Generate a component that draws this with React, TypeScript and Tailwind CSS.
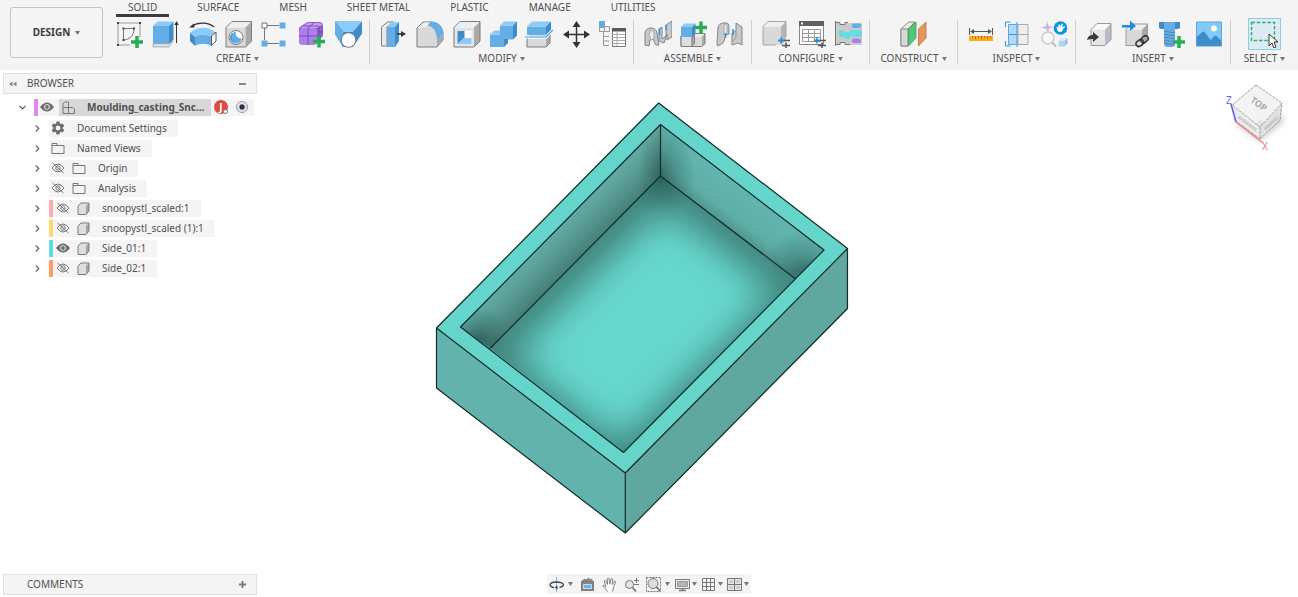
import React, { useState } from 'react';
import { MdSettings } from 'react-icons/md';
import { ChevronDown, ChevronRight } from 'lucide-react';

const BLUE = '#64ade5';
const BLUE_LIGHT = '#8bcbfb';
const BLUE_DARK = '#418cc6';
const GREY = '#d9d9d9';
const GREY_LIGHT = '#efefef';
const GREY_DARK = '#a9a9a9';
const LINE = '#7d7d7d';

type IconProps = { children: React.ReactNode };

function ToolIcon({ children }: IconProps) {
  return (
    <svg viewBox="0 0 28 28" className="h-7 w-7" fill="none" aria-hidden="true">
      {children}
    </svg>
  );
}

type BoxProps = {
  x: number;
  y: number;
  w: number;
  h: number;
  d: number;
  front?: string;
  top?: string;
  side?: string;
  line?: string;
};

// Small oblique box: front face plus a top and a right face of depth d
function Box({ x, y, w, h, d, front = GREY, top = GREY_LIGHT, side = GREY_DARK, line = 'none' }: BoxProps) {
  return (
    <g>
      <path d={`M${x} ${y + d}h${w}v${h}h${-w}z`} fill={front} />
      <path d={`M${x} ${y + d}l${d} ${-d}h${w}l${-d} ${d}z`} fill={top} />
      <path d={`M${x + w} ${y + d}l${d} ${-d}v${h}l${-d} ${d}z`} fill={side} />
      <path d={`M${x} ${y + d}l${d} ${-d}h${w}v${h}l${-d} ${d}h${-w}z`} stroke={line} strokeLinejoin="round" />
    </g>
  );
}

function Plus({ x, y }: { x: number; y: number }) {
  return <path d={`M${x - 6} ${y}h12M${x} ${y - 6}v12`} stroke="#27ae52" strokeWidth="3.5" />;
}

function Sliders({ x, y }: { x: number; y: number }) {
  return (
    <g>
      <path d={`M${x - 6} ${y}h12M${x - 2} ${y + 5}h8`} stroke="#5a5a5a" strokeWidth="1.4" />
      <path d={`M${x - 3} ${y - 3}v6M${x - 6} ${y}h6`} stroke="#1b8fe6" strokeWidth="1.6" />
      <path d={`M${x + 2} ${y + 2}v6`} stroke="#5a5a5a" strokeWidth="1.6" />
    </g>
  );
}

const SketchIcon = () => (
  <ToolIcon>
    <path d="M2 3h22v14M14 25H2V3" stroke="#999" />
    <path d="M7.500 8.500H18c0 7-4 11-10.500 11.500z" stroke="#777" />
    <path d="M1 2h2v2H1zM23 2h2v2h-2zM1 24h2v2H1zM6.500 7.500h2v2h-2zM17 7.500h2v2h-2zM6.500 19h2v2h-2z" fill="#444" />
    <Plus x={21} y={22} />
  </ToolIcon>
);

const ExtrudeIcon = () => (
  <ToolIcon>
    <path d="M1 24l4-3h16l-4 6H1z" fill="#ddd" stroke="#999" strokeWidth=".7" />
    <Box x={1} y={1.500} w={16} h={18} d={4.500} front={BLUE} top={BLUE_LIGHT} side={BLUE_DARK} />
    <path d="M24.500 4v19" stroke="#333" />
    <path d="M24.500 1l2.200 4h-4.400z" fill="#333" />
  </ToolIcon>
);

const RevolveIcon = () => (
  <ToolIcon>
    <path d="M1 13C7 6 21 6 27 13l-5 4c-4-3-12-3-16 0z" fill={BLUE_LIGHT} />
    <path d="M1 13l5 4v9l-5-5z" fill={BLUE_DARK} />
    <path d="M6 17c4-3 12-3 16 0v9c-4-3-12-3-16 0z" fill={BLUE} />
    <path d="M22.500 16l4.500-4v9l-4.500 4.500z" fill="#fff" stroke="#555" />
    <path d="M3 6C9 2 19 2 25 7" stroke="#333" strokeWidth="1.200" />
    <path d="M0 7.500l5-4 .5 4z" fill="#333" />
  </ToolIcon>
);

const HoleIcon = () => (
  <ToolIcon>
    <Box x={1} y={1.500} w={19.500} h={19.500} d={6} line={LINE} />
    <circle cx="11" cy="17.500" r="7" fill="#fff" stroke="#777" />
    <path d="M11 11.500c-8 2-7 12 0 12 3 0 5-2 6-5-5 0-7-3-6-7z" fill={BLUE} />
    <path d="M8 12.500a6 6 0 0 0 0 10c-2-4-2-7 0-10z" fill={BLUE_DARK} />
  </ToolIcon>
);

const PatternIcon = () => (
  <ToolIcon>
    <path d="M6 5.500h12M3.500 8v12M6 23.500h12" stroke="#777" />
    <path d="M1 3h5v5H1z" fill="#fff" stroke="#777" />
    <path d="M18.500 2.500h6v6h-6zM.5 20.500h6v6h-6zM18.500 20.500h6v6h-6z" fill={BLUE} />
  </ToolIcon>
);

const FormIcon = () => (
  <ToolIcon>
    <path d="M1 9q0-2 2-3l5-3q1-1 3-1h10q4 0 4 4v9q0 2-2 3l-5 6H4q-3 0-3-3z" fill="#8d5ec9" />
    <path d="M2 8l6-4q1-1 3-1h10q3 0 3 2l-5 3z" fill="#c79bf8" />
    <rect x="1" y="8" width="18" height="17" rx="3.500" fill="#ac80ea" />
    <path d="M10 8v17M1 16h18l5-5M10 8l6-5M5 6h16v13" stroke="#6f43a8" strokeWidth=".8" />
    <Plus x={21} y={21.500} />
  </ToolIcon>
);

const EmbossIcon = () => (
  <ToolIcon>
    <path d="M1 1.500h27v12L19 27H9L1 14z" fill={BLUE_DARK} />
    <path d="M1 1.500h27L19 12H9.500z" fill={BLUE_LIGHT} />
    <path d="M1 1.500L9.500 12 8 25 1 14z" fill={BLUE} />
    <circle cx="14.500" cy="20" r="7.300" fill="#fdfdfd" stroke="#777" />
  </ToolIcon>
);

const PressPullIcon = () => (
  <ToolIcon>
    <path d="M1.500 7l6-5h6L7 7v19H1.500z" fill="#e9e9e9" stroke={LINE} />
    <path d="M7 7h8v20H7z" fill={BLUE} />
    <path d="M7 7l5-5h7l-4 5z" fill={BLUE_LIGHT} />
    <path d="M15 7l4-5v19l-4 6z" fill={BLUE_DARK} />
    <path d="M17 14h6" stroke="#333" strokeWidth="1.600" />
    <path d="M21 11l5 3-5 3z" fill="#333" />
  </ToolIcon>
);

const FilletIcon = () => (
  <ToolIcon>
    <path d="M1 8l6-6h7c8 0 13 6 13 12v6l-6 7H1z" fill={GREY} stroke={LINE} />
    <path d="M11 5l4-3.500c8 0 12 5 12.500 12L21 20C21 12 18 7 11 5z" fill={BLUE} />
    <path d="M21 20l6-6v6l-6 7z" fill={GREY_DARK} />
    <path d="M2 8l6-5.500h6L11 6l-3 2z" fill={GREY_LIGHT} />
  </ToolIcon>
);

const ShellIcon = () => (
  <ToolIcon>
    <Box x={1} y={1.500} w={20} h={19.500} d={6} line={LINE} front="#e4e4e4" />
    <path d="M4.500 11h14v13h-14z" fill="#fff" />
    <path d="M4.500 11h7v7l-7 6z" fill={BLUE_DARK} />
    <path d="M4.500 24l6-6h8v6z" fill={BLUE_LIGHT} />
  </ToolIcon>
);

const CombineIcon = () => (
  <ToolIcon>
    <Box x={11} y={1.500} w={13} h={14} d={4} front={BLUE} top={BLUE_LIGHT} side={BLUE_DARK} />
    <Box x={1} y={10.500} w={14} h={12.500} d={4} front={BLUE} top={BLUE_LIGHT} side={BLUE_DARK} />
    <path d="M11 6h9v13h-9z" fill={BLUE} />
  </ToolIcon>
);

const SplitIcon = () => (
  <ToolIcon>
    <Box x={2} y={15} w={19} h={8} d={4} line={LINE} />
    <Box x={2} y={1.500} w={19} h={8.500} d={5} front={BLUE} top={BLUE_LIGHT} side={BLUE_DARK} />
    <path d="M0 17h21l7-7" stroke="#fff" strokeWidth="3" />
    <path d="M0 17h21l7-7" stroke="#2f96ea" strokeWidth="1.200" />
  </ToolIcon>
);

const MoveIcon = () => (
  <ToolIcon>
    <path d="M14.500 4v21M4 14.500h21" stroke="#333" strokeWidth="1.500" />
    <path d="M14.500 1l4 6h-8zM14.500 28l4-6h-8zM1 14.500l6-4v8zM28 14.500l-6-4v8z" fill="#333" />
  </ToolIcon>
);

const ParametersIcon = () => (
  <ToolIcon>
    <path d="M6.500 1.500h5v5h-5z" fill="#fff" />
    <path d="M1 1h6v6H1z" fill={BLUE} />
    <path d="M1.500 7.500h5v4h-5zM6.500 6.500h5v5h-5zM5.500 12v13.500H11M5.500 16.500H11M5.500 21H11" stroke="#999" />
    <path d="M14.500 8.500h13v18h-13z" fill="#fff" stroke="#777" />
    <path d="M14 8h14v3.500H14z" fill="#5a5a5a" />
    <path d="M14 14.500h13M14 17.500h13M14 20.500h13M14 23.500h13M19 11v15" stroke="#aaa" />
  </ToolIcon>
);

const JointIcon = () => (
  <ToolIcon>
    <path d="M1 13q1-5 6-5 5 0 6 5l2 12h-3l-3-6-3 1-1 6-4-1z" fill="#c9c9c9" stroke="#848484" />
    <path d="M7 10q3 0 3 3v6l-3 1-2-6z" fill="#ededed" stroke="#999" strokeWidth=".8" />
    <path d="M15 9l3-2v12l4-3V5l6-4v16l-5 3v-6l-3 9-5-2z" fill="#c9c9c9" stroke="#848484" />
    <path d="M15.500 8v7M22 5v5" stroke="#2f96ea" strokeWidth="1.500" />
  </ToolIcon>
);

const NewComponentIcon = () => (
  <ToolIcon>
    <Box x={12} y={13.500} w={10} h={10} d={3} line={LINE} />
    <Box x={1} y={13.500} w={11} h={10} d={2.500} line={LINE} />
    <path d="M1 16h11v10.500H1z" fill="#dedede" stroke={LINE} />
    <Box x={1} y={3.500} w={11} h={10} d={3.500} front={BLUE} top={BLUE_LIGHT} side={BLUE_DARK} />
    <Plus x={21} y={7.500} />
  </ToolIcon>
);

const AsBuiltJointIcon = () => (
  <ToolIcon>
    <path d="M2 8q1-5 6-5 5-1 5 4v7l-3 1-3 8-5 3-1-2z" fill="#c9c9c9" stroke="#848484" />
    <path d="M8 5q3-2 3 2v6l-3 2z" fill="#ededed" stroke="#999" strokeWidth=".8" />
    <path d="M16 13l4-2V3l6 4v18l-4-2-6 2z" fill="#c9c9c9" stroke="#848484" />
    <path d="M20 11v7l-4 4" stroke="#999" />
    <path d="M9.500 13v5M17 9v6" stroke="#2f96ea" strokeWidth="1.600" />
  </ToolIcon>
);

const ConfigureIcon = () => (
  <ToolIcon>
    <Box x={1} y={1.500} w={18} h={18.500} d={5} side="#b5b5b5" />
    <path d="M14 25H1V6.500l5-5h18V17" stroke="#a5a5a5" />
    <Sliders x={22} y={20.500} />
  </ToolIcon>
);

const ConfigTableIcon = () => (
  <ToolIcon>
    <path d="M1.500 1.500h24v23h-24z" fill="#fff" stroke="#888" />
    <path d="M1 1h25v5H1z" fill="#5f5f5f" />
    <path d="M3 2.500h2v2H3z" fill="#fff" />
    <path d="M4.500 9.500h18v12h-18zM4.500 13.500h18M4.500 17.500h18M10.500 9.500v12M16.500 9.500v12" stroke="#999" />
    <Sliders x={22} y={20.500} />
  </ToolIcon>
);

const ConfigRulesIcon = () => (
  <ToolIcon>
    <path d="M1 3h5v2h5V3h17v22H12v-2H7v2H1z" fill="#cbcbcb" />
    <path d="M1.500 1v25M1 2.500h5v2h5v-2h3M1 24.500h5v-2h5v2h5" stroke="#777" />
    <path d="M5 10h5v2h5v-2h13v7H16v2h-5v-2H5z" fill="#68dbe3" />
    <rect x="18" y="3.500" width="9" height="4.500" rx="2" fill="#5daeee" />
    <rect x="18" y="18.500" width="9" height="4.500" rx="2" fill="#a97dea" />
  </ToolIcon>
);

const PlaneIcon = () => (
  <ToolIcon>
    <path d="M1 9l8-7h6L8 9v17H1z" fill="#ededed" stroke="#888" />
    <path d="M1 9h7v17H1z" fill={GREY} stroke="#888" />
    <path d="M8.500 9L16 2v16l-7.500 8z" fill="#55c47b" stroke="#3d9a5c" strokeWidth=".8" />
    <path d="M18.500 9L26 2v16l-7.500 8z" fill="#e59562" stroke="#b8723f" strokeWidth=".8" />
  </ToolIcon>
);

const MeasureIcon = () => (
  <ToolIcon>
    <path d="M1.500 8v7M24.500 8v7M3 11.500h20" stroke="#555" />
    <path d="M2 11.500l4-2.500v5zM24 11.500L20 9v5z" fill="#555" />
    <path d="M1 16h24v5H1z" fill="#ffab12" />
    <path d="M4.500 16v2M7.500 16v3M10.500 16v2M13.500 16v3M16.500 16v2M19.500 16v3M22.500 16v2" stroke="#a8741a" />
  </ToolIcon>
);

const SectionIcon = () => (
  <ToolIcon>
    <path d="M14 4.500h10v20H14zM14 14.500h10" fill="#eee" stroke="#aaa" />
    <path d="M4 4h9v20H4z" fill="#b4d9f5" />
    <path d="M13 2v25M4 14.500h9" stroke="#2f96ea" />
    <path d="M1.500 7V2h5M1.500 21v5h5" stroke="#2f96ea" />
    <path d="M4.500 4.500h9M4.500 4.500v20M4.500 24.500h9" stroke="#5aabec" />
  </ToolIcon>
);

const AssistIcon = () => (
  <ToolIcon>
    <path d="M7 1l1.500 5L14 7l-5 1.500L8 14l-1.500-5L1 7.500 6 6z" fill="#cdb2ec" />
    <circle cx="8" cy="18" r="6" fill="#f9f9f9" stroke="#c9c9c9" strokeWidth="1.400" />
    <path d="M12 22.500l4 4" stroke="#d0b5a0" strokeWidth="1.800" />
    <Box x={18.500} y={18} w={6} h={5.500} d={3} front="#b3d6f0" top="#d7eafa" side="#92bfe0" />
    <circle cx="20.500" cy="8" r="6.800" fill="#0b94dc" />
    <path d="M16.500 6.500l2 1V4.500H20V7l2-3.500 1 .5-1 3.500 2.500-1.500.5 1-2 2c0 4-6 4-6 0z" fill="#fff" />
  </ToolIcon>
);

const DeriveIcon = () => (
  <ToolIcon>
    <Box x={5} y={3.500} w={14} h={16} d={6} front="#e6e6e9" top="#f9f9f9" side="#b9bcc4" line="#999" />
    <path d="M1 20c1-4 3-5 6-5v-3l6 5-6 5v-3c-2 0-4 0-6 1z" fill="#3a3a3a" />
  </ToolIcon>
);

const InsertLinkIcon = () => (
  <ToolIcon>
    <Box x={4} y={4} w={16} h={16} d={5.500} line="#999" />
    <path d="M0 5h8V.5L14 6l-6 5V7.500H0z" fill="#1f8ce0" />
    <g transform="rotate(-38 20 21)" stroke="#333" strokeWidth="1.500">
      <rect x="13" y="18.500" width="8" height="5.500" rx="2.700" />
      <rect x="19" y="18.500" width="8" height="5.500" rx="2.700" />
    </g>
  </ToolIcon>
);

const FastenerIcon = () => (
  <ToolIcon>
    <path d="M5 8h11v17l-2 2H7l-2-2z" fill={BLUE} />
    <path d="M5 11l11 2M5 14l11 2M5 17l11 2M5 20l11 2M5 23l11 2" stroke="#4a86b5" />
    <path d="M0 2h21v6l-2 1H2L0 8z" fill={BLUE_DARK} />
    <path d="M5 2h11v7H5z" fill={BLUE} />
    <Plus x={20} y={22} />
  </ToolIcon>
);

const CanvasIcon = () => (
  <ToolIcon>
    <path d="M1.500 2h25v24h-25z" fill="#81c8fb" stroke="#5fa6d8" />
    <circle cx="19" cy="8.500" r="3" fill="#fffbd0" />
    <path d="M1.500 17l6-5q1-1 2 0l6 8 4-4q1-1 2 0l5 5v5h-25z" fill="#3c8dcb" />
  </ToolIcon>
);

const SelectIcon = () => (
  <ToolIcon>
    <path d="M1.500 2.500h23v18h-23z" stroke="#2fae5c" strokeWidth="1.400" strokeDasharray="3.500 1.800" />
    <path d="M19 14v12l3-3 2 5 2-1-2-5h4z" fill="#fff" stroke="#333" />
  </ToolIcon>
);

type Tool = { name: string; icon: React.ComponentType };
type ToolGroup = { name: string; width: string; tools: Tool[] };

const groups: ToolGroup[] = [
  {
    name: 'CREATE',
    width: 'w-[264px]',
    tools: [
      { name: 'Create Sketch', icon: SketchIcon },
      { name: 'Extrude', icon: ExtrudeIcon },
      { name: 'Revolve', icon: RevolveIcon },
      { name: 'Hole', icon: HoleIcon },
      { name: 'Pattern', icon: PatternIcon },
      { name: 'Create Form', icon: FormIcon },
      { name: 'Emboss', icon: EmbossIcon },
    ],
  },
  {
    name: 'MODIFY',
    width: 'w-[264px]',
    tools: [
      { name: 'Press Pull', icon: PressPullIcon },
      { name: 'Fillet', icon: FilletIcon },
      { name: 'Shell', icon: ShellIcon },
      { name: 'Combine', icon: CombineIcon },
      { name: 'Split Body', icon: SplitIcon },
      { name: 'Move', icon: MoveIcon },
      { name: 'Change Parameters', icon: ParametersIcon },
    ],
  },
  {
    name: 'ASSEMBLE',
    width: 'w-[118px]',
    tools: [
      { name: 'Joint', icon: JointIcon },
      { name: 'New Component', icon: NewComponentIcon },
      { name: 'As-built Joint', icon: AsBuiltJointIcon },
    ],
  },
  {
    name: 'CONFIGURE',
    width: 'w-[118px]',
    tools: [
      { name: 'Configure', icon: ConfigureIcon },
      { name: 'Configuration Table', icon: ConfigTableIcon },
      { name: 'Configuration Rules', icon: ConfigRulesIcon },
    ],
  },
  { name: 'CONSTRUCT', width: 'w-[88px]', tools: [{ name: 'Offset Plane', icon: PlaneIcon }] },
  {
    name: 'INSPECT',
    width: 'w-[118px]',
    tools: [
      { name: 'Measure', icon: MeasureIcon },
      { name: 'Section Analysis', icon: SectionIcon },
      { name: 'Inspect Assistant', icon: AssistIcon },
    ],
  },
  {
    name: 'INSERT',
    width: 'w-[155px]',
    tools: [
      { name: 'Derive', icon: DeriveIcon },
      { name: 'Insert Link', icon: InsertLinkIcon },
      { name: 'Insert Fastener', icon: FastenerIcon },
      { name: 'Canvas', icon: CanvasIcon },
    ],
  },
];

const tabs = ['SOLID', 'SURFACE', 'MESH', 'SHEET METAL', 'PLASTIC', 'MANAGE', 'UTILITIES'];

function Caret() {
  return (
    <svg viewBox="0 0 5 4" className="h-1 w-[5px] shrink-0" aria-hidden="true">
      <path d="M0 0h5L2.500 4z" fill="#777" />
    </svg>
  );
}

function Ribbon() {
  const [activeTab, setActiveTab] = useState('SOLID');

  return (
    <header className="flex h-[70px] bg-[#f4f4f4]">
      <div className="w-[106px] shrink-0 pt-[7px] pl-[10px]">
        <button className="flex h-[51px] w-[93px] items-center justify-center gap-[5px] rounded-[3px] border border-[#c4c4c4] text-[10px] font-bold text-[#3c3c3c]">
          DESIGN
          <Caret />
        </button>
      </div>
      <div className="min-w-0 flex-1">
        <nav className="flex gap-4 pl-[10px]">
          {tabs.map((tab) => (
            <button
              key={tab}
              onClick={() => setActiveTab(tab)}
              className={
                tab === activeTab
                  ? 'h-[17px] border-b-3 border-[#3c3c3c] px-3 text-[10px] leading-[14px] whitespace-nowrap'
                  : 'h-[17px] border-b-3 border-transparent px-3 text-[10px] leading-[14px] whitespace-nowrap'
              }
            >
              {tab}
            </button>
          ))}
        </nav>
        <div className="flex pt-[3px]">
          {groups.map((group) => (
            <section key={group.name} className={`${group.width} shrink-0 border-r border-[#cfcfcf]`}>
              <div className={group.tools.length > 1 ? 'flex justify-between pr-[7px] pl-[10px]' : 'flex justify-center'}>
                {group.tools.map(({ name, icon: Icon }) => (
                  <button key={name} aria-label={name} className="h-7 w-7">
                    <Icon />
                  </button>
                ))}
              </div>
              <button className="flex h-4 w-full items-center justify-center gap-[3px] pt-[5px] text-[10px]">
                {group.name}
                <Caret />
              </button>
            </section>
          ))}
          <section className="min-w-[66px] flex-1">
            <div className="mx-auto -my-[2px] flex w-[33px] border border-[#8ccbea] bg-[#dcecf4] py-px pl-px">
              <button aria-label="Select" className="h-7 w-7">
                <SelectIcon />
              </button>
            </div>
            <button className="flex h-4 w-full items-center justify-center gap-[3px] pt-[5px] text-[10px]">
              SELECT
              <Caret />
            </button>
          </section>
        </div>
      </div>
    </header>
  );
}

function EyeIcon({ hidden }: { hidden?: boolean }) {
  if (hidden) {
    return (
      <svg viewBox="0 0 14 12" className="h-3 w-[14px]" fill="none" stroke="#777" aria-hidden="true">
        <path d="M1 6q6-8 12 0-6 8-12 0z" />
        <circle cx="7" cy="6" r="2.200" />
        <path d="M1.500 1l11 10" />
      </svg>
    );
  }
  return (
    <svg viewBox="0 0 14 12" className="h-3 w-[14px]" aria-hidden="true">
      <path d="M0 6q7-9 14 0-7 9-14 0z" fill="#6c6c6c" />
      <circle cx="7" cy="6" r="2.800" fill="#f4f4f4" />
      <circle cx="7" cy="6" r="1.900" fill="#6c6c6c" />
    </svg>
  );
}

function FolderIcon() {
  return (
    <svg viewBox="0 0 14 12" className="h-3 w-[14px]" fill="none" stroke="#777" aria-hidden="true">
      <path d="M1 11.500v-10h5v2h7v8zM1 3.500h5" />
    </svg>
  );
}

function BodyIcon() {
  return (
    <svg viewBox="0 0 13 13" className="h-[13px] w-[13px]" fill="none" aria-hidden="true">
      <path d="M1 4l3-3h8v8l-3 3.500H1z" fill="#dedede" />
      <path d="M9 4l3-3v8l-3 3.500z" fill="#a5a5a5" />
      <path d="M1 4l3-3h8v8l-3 3.500H1z" stroke="#7c7c7c" strokeLinejoin="round" />
    </svg>
  );
}

type Row = { label: string; kind: 'settings' | 'folder' | 'hiddenFolder' | 'body'; color?: string; visible?: boolean };

const folders: Row[] = [
  { label: 'Document Settings', kind: 'settings' },
  { label: 'Named Views', kind: 'folder' },
  { label: 'Origin', kind: 'hiddenFolder' },
  { label: 'Analysis', kind: 'hiddenFolder' },
];

const components: Row[] = [
  { label: 'snoopystl_scaled:1', kind: 'body', color: 'bg-[#ffaab0]' },
  { label: 'snoopystl_scaled (1):1', kind: 'body', color: 'bg-[#ffd76e]' },
  { label: 'Side_01:1', kind: 'body', color: 'bg-[#5fdce0]', visible: true },
  { label: 'Side_02:1', kind: 'body', color: 'bg-[#ff9c66]' },
];

function TreeRow({ row }: { row: Row }) {
  const [visible, setVisible] = useState(!!row.visible);

  return (
    <li className="flex h-[18px] items-center">
      <button aria-label={`Expand ${row.label}`} className="mr-[5px] ml-[28px] flex w-[13px] justify-center">
        <ChevronRight size={11} strokeWidth={2.500} color="#666" />
      </button>
      <div className="flex h-[17px] items-center bg-[#f4f4f4] pr-[11px]">
        {row.color && <span className={`${row.color} mr-px h-full w-1`} />}
        {(row.kind === 'hiddenFolder' || row.kind === 'body') && (
          <button
            aria-label={`Toggle ${row.label}`}
            onClick={() => setVisible(!visible)}
            className="mr-[5px] ml-[2px]"
          >
            <EyeIcon hidden={!visible} />
          </button>
        )}
        {row.kind === 'settings' && <MdSettings size={16} color="#6c6c6c" className="mr-[11px] ml-px" />}
        {(row.kind === 'folder' || row.kind === 'hiddenFolder') && (
          <span className="mr-3 ml-[2px]">
            <FolderIcon />
          </span>
        )}
        {row.kind === 'body' && (
          <span className="mr-3 ml-[2px]">
            <BodyIcon />
          </span>
        )}
        <span className="text-[10px] whitespace-nowrap">{row.label}</span>
      </div>
    </li>
  );
}

function Browser() {
  return (
    <aside>
      <div className="flex h-[21px] items-center border border-[#e0e0e0] bg-[#f4f4f4] pr-[10px] pl-[5px] text-[10px]">
        <svg viewBox="0 0 8 6" className="mr-[10px] h-[6px] w-2" fill="#888" aria-hidden="true">
          <path d="M3.500.5v5L0 3zM7.500.5v5L4 3z" />
        </svg>
        <span className="flex-1">BROWSER</span>
        <button aria-label="Minimise browser" className="h-[2px] w-[7px] bg-[#888]" />
      </div>
      <ul className="flex flex-col gap-[2px] pt-1">
        <li className="flex h-[18px] items-center pl-[13px]">
          <button aria-label="Collapse document" className="mr-[5px] flex w-[13px] justify-center">
            <ChevronDown size={11} strokeWidth={2.500} color="#555" />
          </button>
          <div className="mr-[3px] flex h-[17px] flex-1 items-center bg-[#f4f4f4]">
            <span className="h-full w-1 bg-[#e08ce6]" />
            <button aria-label="Toggle document" className="mx-[2px] w-[14px]">
              <EyeIcon />
            </button>
            <div className="ml-[3px] flex h-full w-[152px] items-center bg-[#d8d8d8] pr-[5px] pl-[3px]">
              <svg viewBox="0 0 13 13" className="mr-3 h-[13px] w-[13px] shrink-0" fill="none" stroke="#777" aria-hidden="true">
                <path d="M1 2.500L2.500 1h4v11.500H1zM1 6.500h6M6.500 6.500h4l2 1.500v4.500h-6" />
              </svg>
              <span className="text-[10px] font-bold whitespace-nowrap">Moulding_casting_Snc...</span>
            </div>
            <span className="relative ml-[3px] flex h-[14px] w-[14px] items-center justify-center rounded-full bg-[#e04b41] text-[10px] leading-none font-bold text-white">
              J
              <span className="absolute right-0 bottom-0 h-[5px] w-[5px] rounded-full border border-[#777] bg-white" />
            </span>
            <input
              type="radio"
              aria-label="Activate document"
              defaultChecked
              className="ml-2 h-3 w-3 appearance-none rounded-full border border-[#999] bg-[radial-gradient(circle,#333_30%,#dbe6f2_45%)]"
            />
          </div>
        </li>
        <li className="pt-px">
          <ul className="flex flex-col gap-[2px]">
            {folders.map((row) => (
              <TreeRow key={row.label} row={row} />
            ))}
          </ul>
        </li>
        <li>
          <ul className="flex flex-col gap-[2px]">
            {components.map((row) => (
              <TreeRow key={row.label} row={row} />
            ))}
          </ul>
        </li>
      </ul>
    </aside>
  );
}

function Model() {
  return (
    <svg viewBox="0 0 430 450" className="h-[450px] w-[430px]" aria-label="Open mould box">
      <defs>
        <linearGradient id="leftWall" gradientUnits="userSpaceOnUse" x1="145" y1="172" x2="121" y2="148">
          <stop offset="0" stopColor="#477f79" />
          <stop offset=".5" stopColor="#559790" />
          <stop offset="1" stopColor="#5fa9a2" />
        </linearGradient>
        <linearGradient id="rightWall" gradientUnits="userSpaceOnUse" x1="298" y1="137" x2="318" y2="111">
          <stop offset="0" stopColor="#51978f" />
          <stop offset=".35" stopColor="#5dada6" />
          <stop offset="1" stopColor="#61b5ae" />
        </linearGradient>
        <radialGradient id="shade">
          <stop offset="0" stopColor="#23504b" stopOpacity=".7" />
          <stop offset=".45" stopColor="#23504b" stopOpacity=".3" />
          <stop offset="1" stopColor="#23504b" stopOpacity="0" />
        </radialGradient>
        <filter id="soften" x="-50%" y="-50%" width="200%" height="200%">
          <feGaussianBlur stdDeviation="19" />
        </filter>
        <clipPath id="floor">
          <path d="M230.500 86L365 188.500 193.500 362.500 60 258.500z" />
        </clipPath>
        <clipPath id="leftClip">
          <path d="M230.500 34.500V86L60 258.500 30.500 237z" />
        </clipPath>
        <clipPath id="rightClip">
          <path d="M230.500 34.500V86L365 188.500 394 160z" />
        </clipPath>
      </defs>
      <path d="M6.500 238L195.300 383v60L6.500 298z" fill="#63b3ad" />
      <path d="M417.500 158.500L195.300 383v60l222.200-224z" fill="#5fa79f" />
      <path d="M228.700 13L417.500 158.500 195.300 383 6.500 238z" fill="#65d4ca" />
      <g clipPath="url(#leftClip)">
        <path d="M230.500 34.500V86L60 258.500 30.500 237z" fill="url(#leftWall)" />
        <ellipse cx="234" cy="84" rx="26" ry="55" fill="url(#shade)" />
        <circle cx="48" cy="250" r="34" fill="url(#shade)" />
      </g>
      <g clipPath="url(#rightClip)">
        <path d="M230.500 34.500V86L365 188.500 394 160z" fill="url(#rightWall)" />
        <ellipse cx="228" cy="86" rx="38" ry="58" fill="url(#shade)" />
        <circle cx="374" cy="184" r="44" fill="url(#shade)" />
      </g>
      <g clipPath="url(#floor)">
        <path d="M230.500 86L365 188.500 193.500 362.500 60 258.500z" fill="#3f837b" />
        <path d="M234 118L346 202 190 354 82 266z" fill="#66d7ce" filter="url(#soften)" />
        <path d="M234 160L292 206 184 306 130 264z" fill="#66d7ce" filter="url(#soften)" />
        <circle cx="230" cy="86" r="38" fill="url(#shade)" />
      </g>
      <g fill="none" stroke="#102b29" strokeWidth="1.200" strokeLinejoin="round">
        <path d="M228.700 13L417.500 158.500v60L195.300 443 6.500 298v-60z" />
        <path d="M6.500 238L195.300 383 417.500 158.500M195.300 383v60" />
        <path d="M230.500 34.500L394 160 193.500 362.500 30.500 237z" />
        <path d="M230.500 34.500V86M60 258.500L230.500 86 365 188.500" />
      </g>
    </svg>
  );
}

function ViewCube() {
  return (
    <svg viewBox="0 0 64 76" className="h-[76px] w-16" aria-label="View cube">
      <defs>
        <filter id="cubeShadow" x="-40%" y="-40%" width="180%" height="180%">
          <feGaussianBlur stdDeviation="3" />
        </filter>
      </defs>
      <path d="M10 40l25 18 23-22v8L35 62 13 46z" fill="#777" opacity=".55" filter="url(#cubeShadow)" />
      <path d="M8 27l28 22v12L12 43z" fill="#ececec" />
      <path d="M36 49l22-23-2 16-20 19z" fill="#e0e0e0" />
      <path d="M32 7l26 18-22 24L8 27z" fill="#f3f3f3" />
      <path d="M36 41l5 4-5 5-5-4z" fill="#dce3ea" />
      <path d="M32 7l26 18-22 24L8 27zM36 49v12L12 43M36 61l20-19 2-17" fill="none" stroke="#8a8a8a" strokeWidth=".8" strokeDasharray="3 1" />
      <text x="34" y="29" fontSize="9" fontWeight="600" fill="#a0a0a0" textAnchor="middle" transform="rotate(36 34 27)">TOP</text>
      <path d="M15 39l17 13M41 51l13-12" stroke="#bcbcbc" strokeWidth="3" strokeDasharray="1.500 1" />
      <path d="M7 26l5 18" stroke="#5a55f0" strokeWidth="1.500" />
      <path d="M12 44l27 21" stroke="#f08080" strokeWidth="1.500" />
      <text x="2" y="26" fontSize="10" fill="#6a66f0">Z</text>
      <text x="38" y="72" fontSize="10" fill="#f47878">X</text>
    </svg>
  );
}

function NavIcon({ children }: IconProps) {
  return (
    <svg viewBox="0 0 15 15" className="h-[15px] w-[15px]" fill="none" stroke="#777" aria-hidden="true">
      {children}
    </svg>
  );
}

const OrbitIcon = () => (
  <NavIcon>
    <path d="M7.500 0v15" stroke="#6cb8f0" />
    <path d="M5 10.500C-1 9.500 0 5 7.500 5s9.500 4 3 5.500" stroke="#444" strokeWidth="1.300" />
    <path d="M8.500 8.500v4l-3-2z" fill="#444" stroke="none" />
  </NavIcon>
);

const LookAtIcon = () => (
  <NavIcon>
    <path d="M2 4l3-2 1 1 3-2v2l3-1v2z" fill="#888" stroke="#888" />
    <path d="M1.500 4.500h12v9h-12z" fill="#888" />
    <path d="M3.500 7.500h8v4h-8z" fill="#6bb6f0" stroke="#e8f4fd" strokeWidth=".7" />
  </NavIcon>
);

const PanIcon = () => (
  <NavIcon>
    <path
      d="M5.500 14.500C4 12 2 10.500.8 8.800c.8-.9 2-.2 3 .9L2.300 4c.5-1 1.500-.8 1.900.2L5.500 7.500 5.300 1.800c.4-1 1.500-1 1.800 0L7.800 7l1.200-5c.5-.9 1.600-.6 1.700.3L10.200 7.500l2-3.300c.8-.6 1.600 0 1.400.9L11.800 9.500c-.3 2-.8 3-1.300 5"
      fill="#fafafa"
      strokeWidth=".9"
    />
  </NavIcon>
);

const ZoomIcon = () => (
  <NavIcon>
    <circle cx="5.500" cy="7.500" r="4" fill="#e4e4e4" />
    <path d="M8.500 10.500l3.500 4" stroke="#8b6b4b" strokeWidth="1.600" />
    <path d="M10 3.500h5M12.500 1v5M10 7.500h5" stroke="#666" strokeWidth=".9" />
  </NavIcon>
);

const FitIcon = () => (
  <NavIcon>
    <path d="M.5.5h14v14H.5z" strokeDasharray="2 1" />
    <circle cx="7" cy="6.500" r="5" fill="#ddd" />
    <path d="M10.500 10l3.500 4" stroke="#8b6b4b" strokeWidth="1.600" />
  </NavIcon>
);

const DisplayIcon = () => (
  <NavIcon>
    <path d="M.5 2.500h14v9H.5z" fill="#eee" />
    <path d="M2.500 4.500h10v5h-10z" fill="#b5b5b5" stroke="#999" />
    <path d="M4 13.500h7M7.500 11.500v2" strokeWidth="1.500" />
  </NavIcon>
);

const GridIcon = () => (
  <NavIcon>
    <path d="M1.500 1.500h12v12h-12zM5.500 1.500v12M9.500 1.500v12M1.500 5.500h12M1.500 9.500h12" />
  </NavIcon>
);

const ViewportsIcon = () => (
  <NavIcon>
    <path d="M.5 1.500h14v12H.5z" fill="#e4e4e4" />
    <path d="M7.500 1.500v12M.5 7.500h14" />
    <path d="M2.500 4.500h3M9.500 4.500h3M2.500 10.500h3M9.500 10.500h3" strokeWidth="2" stroke="#bbb" />
  </NavIcon>
);

function NavigationBar() {
  return (
    <nav className="mb-px flex h-5 items-center gap-[5px] bg-[#f4f4f4] px-[2px]">
      <div className="flex items-center gap-[7px]">
        <button aria-label="Orbit" className="flex items-center gap-1"><OrbitIcon /><Caret /></button>
        <button aria-label="Look At"><LookAtIcon /></button>
        <button aria-label="Pan"><PanIcon /></button>
        <button aria-label="Zoom"><ZoomIcon /></button>
        <button aria-label="Fit" className="flex items-center gap-1"><FitIcon /><Caret /></button>
      </div>
      <div className="flex items-center gap-1">
        <button aria-label="Display Settings" className="flex items-center gap-[2px]"><DisplayIcon /><Caret /></button>
        <button aria-label="Grid and Snaps" className="flex items-center gap-[2px]"><GridIcon /><Caret /></button>
        <button aria-label="Viewports" className="flex items-center gap-[2px]"><ViewportsIcon /><Caret /></button>
      </div>
    </nav>
  );
}

function App() {
  return (
    <div className="flex min-h-screen flex-col bg-white font-['Noto_Sans',sans-serif] text-[#505050]">
      <Ribbon />
      {/* the viewport and the panels floating over it share one grid cell */}
      <main className="grid flex-1">
        <div className="flex items-start justify-center pt-5 pr-[8px] [grid-area:1/1]">
          <Model />
        </div>
        <div className="grid grid-cols-[254px_1fr_254px] px-[3px] pt-[3px] pb-[2px] [grid-area:1/1]">
          <div className="flex flex-col justify-between">
            <Browser />
            <div className="flex h-[21px] items-center border border-[#e0e0e0] bg-[#f4f4f4] pr-[10px] pl-[23px] text-[10px]">
              <span className="flex-1">COMMENTS</span>
              <button aria-label="Add comment">
                <svg viewBox="0 0 7 7" className="h-[7px] w-[7px]" aria-hidden="true">
                  <path d="M0 3.500h7M3.500 0v7" stroke="#777" strokeWidth="1.800" />
                </svg>
              </button>
            </div>
          </div>
          <div className="flex items-end justify-center">
            <NavigationBar />
          </div>
          <div className="flex justify-end pt-[5px] pr-[7px]">
            <ViewCube />
          </div>
        </div>
      </main>
    </div>
  );
}

export default App;
